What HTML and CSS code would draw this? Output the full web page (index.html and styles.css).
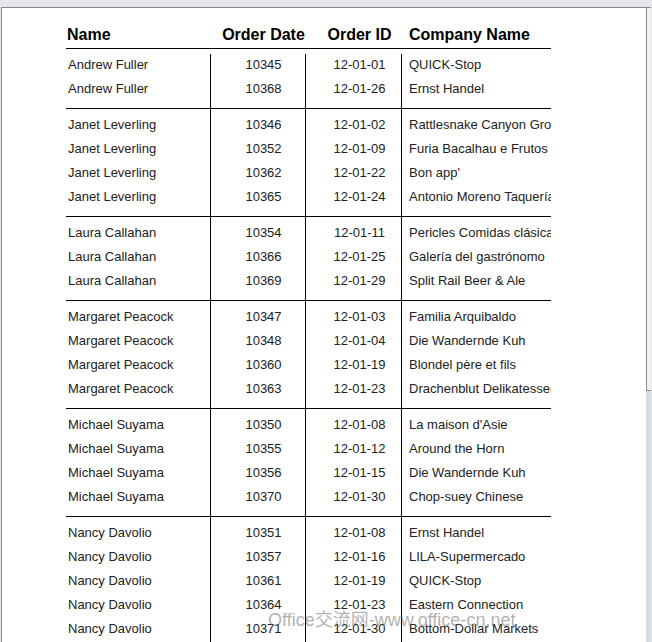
FILE: index.html
```html
<!DOCTYPE html>
<html>
<head>
<meta charset="utf-8">
<link rel="stylesheet" href="styles.css">
</head>
<body>
<div class="topbar"></div>
<div class="frame">
  <div class="page">
    <div class="report">
      <div class="head">
        <div class="c c1">Name</div>
        <div class="c c2">Order Date</div>
        <div class="c c3">Order ID</div>
        <div class="c c4">Company Name</div>
      </div>

      <div class="group first">
        <div class="c c1"><div class="r">Andrew Fuller</div><div class="r">Andrew Fuller</div></div>
        <div class="c c2"><div class="r">10345</div><div class="r">10368</div></div>
        <div class="c c3"><div class="r">12-01-01</div><div class="r">12-01-26</div></div>
        <div class="c c4"><div class="r">QUICK-Stop</div><div class="r">Ernst Handel</div></div>
      </div>

      <div class="group">
        <div class="c c1"><div class="r">Janet Leverling</div><div class="r">Janet Leverling</div><div class="r">Janet Leverling</div><div class="r">Janet Leverling</div></div>
        <div class="c c2"><div class="r">10346</div><div class="r">10352</div><div class="r">10362</div><div class="r">10365</div></div>
        <div class="c c3"><div class="r">12-01-02</div><div class="r">12-01-09</div><div class="r">12-01-22</div><div class="r">12-01-24</div></div>
        <div class="c c4"><div class="r">Rattlesnake Canyon Grocery</div><div class="r">Furia Bacalhau e Frutos do Mar</div><div class="r">Bon app'</div><div class="r">Antonio Moreno Taquería</div></div>
      </div>

      <div class="group">
        <div class="c c1"><div class="r">Laura Callahan</div><div class="r">Laura Callahan</div><div class="r">Laura Callahan</div></div>
        <div class="c c2"><div class="r">10354</div><div class="r">10366</div><div class="r">10369</div></div>
        <div class="c c3"><div class="r">12-01-11</div><div class="r">12-01-25</div><div class="r">12-01-29</div></div>
        <div class="c c4"><div class="r">Pericles Comidas clásicas</div><div class="r">Galería del gastrónomo</div><div class="r">Split Rail Beer &amp; Ale</div></div>
      </div>

      <div class="group">
        <div class="c c1"><div class="r">Margaret Peacock</div><div class="r">Margaret Peacock</div><div class="r">Margaret Peacock</div><div class="r">Margaret Peacock</div></div>
        <div class="c c2"><div class="r">10347</div><div class="r">10348</div><div class="r">10360</div><div class="r">10363</div></div>
        <div class="c c3"><div class="r">12-01-03</div><div class="r">12-01-04</div><div class="r">12-01-19</div><div class="r">12-01-23</div></div>
        <div class="c c4"><div class="r">Familia Arquibaldo</div><div class="r">Die Wandernde Kuh</div><div class="r">Blondel père et fils</div><div class="r">Drachenblut Delikatessen</div></div>
      </div>

      <div class="group">
        <div class="c c1"><div class="r">Michael Suyama</div><div class="r">Michael Suyama</div><div class="r">Michael Suyama</div><div class="r">Michael Suyama</div></div>
        <div class="c c2"><div class="r">10350</div><div class="r">10355</div><div class="r">10356</div><div class="r">10370</div></div>
        <div class="c c3"><div class="r">12-01-08</div><div class="r">12-01-12</div><div class="r">12-01-15</div><div class="r">12-01-30</div></div>
        <div class="c c4"><div class="r">La maison d'Asie</div><div class="r">Around the Horn</div><div class="r">Die Wandernde Kuh</div><div class="r">Chop-suey Chinese</div></div>
      </div>

      <div class="group">
        <div class="c c1"><div class="r">Nancy Davolio</div><div class="r">Nancy Davolio</div><div class="r">Nancy Davolio</div><div class="r">Nancy Davolio</div><div class="r">Nancy Davolio</div></div>
        <div class="c c2"><div class="r">10351</div><div class="r">10357</div><div class="r">10361</div><div class="r">10364</div><div class="r">10371</div></div>
        <div class="c c3"><div class="r">12-01-08</div><div class="r">12-01-16</div><div class="r">12-01-19</div><div class="r">12-01-23</div><div class="r">12-01-30</div></div>
        <div class="c c4"><div class="r">Ernst Handel</div><div class="r">LILA-Supermercado</div><div class="r">QUICK-Stop</div><div class="r">Eastern Connection</div><div class="r">Bottom-Dollar Markets</div></div>
      </div>
    </div>
  </div>
  <div class="scrollbar"><div class="thumb"></div></div>
</div>
<div class="watermark">Office交流网-www.office-cn.net</div>
</body>
</html>
```

FILE: styles.css
```css
html, body {
  margin: 0;
  padding: 0;
  height: 642px;
  overflow: hidden;
}
body {
  background: #e6e7eb;
  font-family: "Liberation Sans", Arial, sans-serif;
  position: relative;
}
.topbar {
  height: 7px;
  background: #e6e7eb;
}
.frame {
  display: flex;
  height: 635px;
  padding-left: 1px;
}
.page {
  width: 645px;
  background: #ffffff;
  border-left: 1px solid #8a8a8a;
  border-top: 1px solid #8a8a8a;
  padding: 17px 0 0 64px;
  box-sizing: border-box;
  overflow: hidden;
}
.scrollbar {
  width: 5px;
  background: #d6dae2;
  display: flex;
  flex-direction: column;
}
.thumb {
  height: 384px;
  background: #eef1f6;
  border-left: 1px solid #8a8a8a;
  border-bottom: 1px solid #8a8a8a;
  border-top: 1px solid #8a8a8a;
  box-sizing: border-box;
}
.report {
  width: 485px;
}
.head {
  display: flex;
  border-bottom: 1px solid #000;
  padding-bottom: 3px;
  font-weight: bold;
  font-size: 16px;
  line-height: 20px;
  color: #000;
}
.head .c {
  border-left-color: transparent;
}
.head .c1 {
  padding-left: 1px;
}
.c {
  box-sizing: border-box;
  white-space: nowrap;
  overflow: hidden;
}
.c1 {
  width: 144px;
  padding-left: 2px;
}
.c2 {
  width: 95px;
  border-left: 1px solid #000;
  padding-left: 11px;
  text-align: center;
}
.c3 {
  width: 96px;
  border-left: 1px solid #000;
  padding-left: 12px;
  text-align: center;
}
.c4 {
  width: 150px;
  border-left: 1px solid #000;
  padding-left: 7px;
}
.group {
  display: flex;
  border-top: 1px solid #000;
  font-size: 13px;
  color: #222222;
}
.group .c {
  display: flex;
  flex-direction: column;
  gap: 4px;
  padding-top: 5px;
  padding-bottom: 10px;
}
.group.first {
  border-top: none;
  margin-top: 5px;
}
.group.first .c {
  padding-top: 0;
}
.r {
  height: 20px;
  line-height: 22px;
}
.watermark {
  position: absolute;
  left: 268px;
  top: 609px;
  font-family: "Liberation Sans", "Noto Sans CJK SC", sans-serif;
  font-size: 18px;
  line-height: 22px;
  color: rgba(110, 110, 110, 0.55);
  white-space: nowrap;
}
```
